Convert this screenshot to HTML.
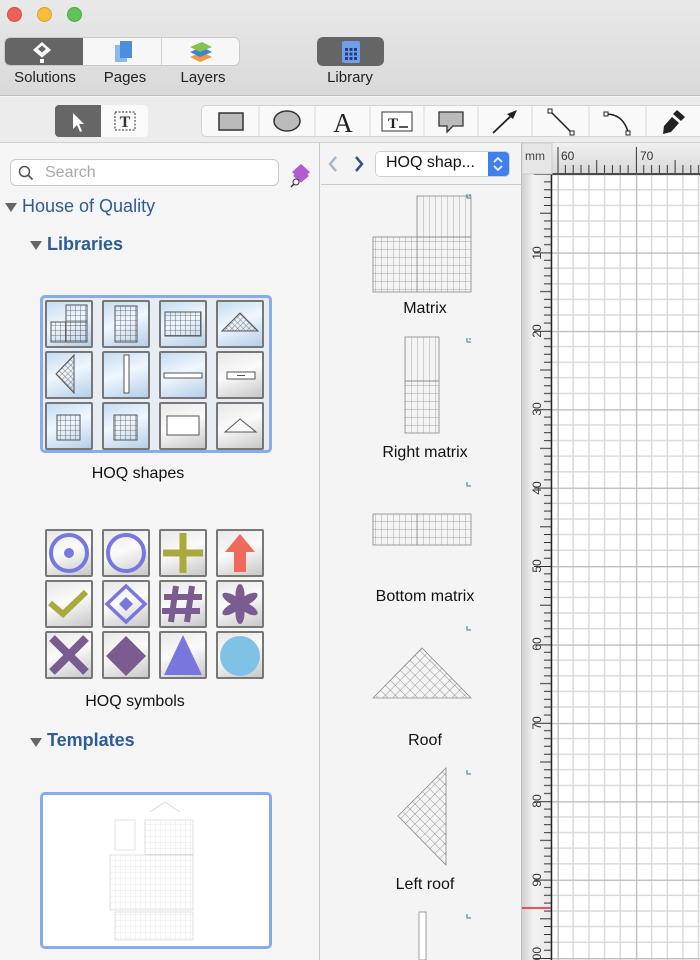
<!DOCTYPE html>
<html><head><meta charset="utf-8"><style>
*{margin:0;padding:0;box-sizing:border-box}
body{width:700px;height:960px;overflow:hidden;background:#f4f4f4;font-family:"Liberation Sans",sans-serif;position:relative}
.a{position:absolute}
.lbl{position:absolute;font-size:15px;color:#222;text-align:center}
.h{position:absolute;color:#2d5c97;font-size:18px}
.cell{position:absolute;width:48px;height:48px;border:2px solid #777;border-radius:2px;background:linear-gradient(160deg,#e8e8e8,#fafafa 45%,#c8c8c8)}
.cb{background:linear-gradient(160deg,#c4dcf2,#f0f7fd 45%,#b4cfea)}
.cap{position:absolute;font-size:16px;color:#111;text-align:center}
</style></head><body>
<div class="a" style="left:0;top:0;width:700px;height:96px;background:linear-gradient(#e9e9e9,#d9d9d9);border-bottom:1px solid #bdbdbd"></div>
<div class="a" style="left:7px;top:7px;width:15px;height:15px;border-radius:50%;background:#ee5f57;border:1px solid #d8493f"></div>
<div class="a" style="left:37px;top:7px;width:15px;height:15px;border-radius:50%;background:#f6bd3b;border:1px solid #dca12a"></div>
<div class="a" style="left:67px;top:7px;width:15px;height:15px;border-radius:50%;background:#5fc454;border:1px solid #49a83f"></div>
<div class="a" style="left:4px;top:37px;width:236px;height:29px;border-radius:6px;background:#f7f7f7;border:1px solid #c9c9c9;overflow:hidden">
 <div class="a" style="left:0;top:0;width:78px;height:29px;background:#656565"></div>
 <div class="a" style="left:156px;top:0;width:1px;height:29px;background:#d0d0d0"></div>
</div>
<svg class="a" style="left:30px;top:40px" width="24" height="24" viewBox="0 0 24 24"><path d="M12 2 L21 10 L12 18 L3 10Z" fill="#fff"/><path d="M5 13 L12 19 L19 13" stroke="#656565" stroke-width="2" fill="none"/><path d="M8 9 L12 5.5 L16 9 L12 12.5Z" fill="#656565"/><rect x="10" y="19" width="4" height="4" fill="#fff"/></svg>
<svg class="a" style="left:112px;top:40px" width="22" height="24"><rect x="3" y="5" width="12" height="17" fill="#8ab8ef"/><rect x="8" y="1" width="12" height="17" fill="#4a8ee0"/></svg>
<svg class="a" style="left:188px;top:40px" width="26" height="24"><path d="M2 17 L14 12 L24 17 L12 22Z" fill="#f09a3a"/><path d="M2 12 L14 7 L24 12 L12 17Z" fill="#3f83d8"/><path d="M2 7 L14 2 L24 7 L12 12Z" fill="#86c24a"/></svg>
<div class="lbl" style="left:4px;top:69px;width:82px">Solutions</div>
<div class="lbl" style="left:86px;top:69px;width:78px">Pages</div>
<div class="lbl" style="left:164px;top:69px;width:78px">Layers</div>
<div class="a" style="left:317px;top:37px;width:67px;height:29px;border-radius:6px;background:#656565"></div>
<svg class="a" style="left:340px;top:40px" width="22" height="24"><rect x="2" y="1" width="18" height="22" rx="2" fill="#6f9fe8"/><g fill="#1e3f80"><rect x="5" y="8" width="3" height="3"/><rect x="9.5" y="8" width="3" height="3"/><rect x="14" y="8" width="3" height="3"/><rect x="5" y="12.5" width="3" height="3"/><rect x="9.5" y="12.5" width="3" height="3"/><rect x="14" y="12.5" width="3" height="3"/><rect x="5" y="17" width="3" height="3"/><rect x="9.5" y="17" width="3" height="3"/><rect x="14" y="17" width="3" height="3"/></g></svg>
<div class="lbl" style="left:310px;top:69px;width:80px">Library</div>
<div class="a" style="left:0;top:97px;width:700px;height:46px;background:#ececec;border-bottom:1px solid #d0d0d0"></div>
<div class="a" style="left:55px;top:105px;width:93px;height:32px;border-radius:4px;background:#fafafa;overflow:hidden"><div class="a" style="left:0;top:0;width:46px;height:32px;background:#666"></div></div>
<svg class="a" style="left:55px;top:105px" width="93" height="32"><path d="M18 8 L18 24 L22 20 L25 27 L27 26 L24 19 L29 19Z" fill="#fff"/><rect x="60" y="7" width="20" height="18" fill="none" stroke="#333" stroke-dasharray="2 1.5"/><text x="70" y="22" text-anchor="middle" font-family="Liberation Serif" font-size="16" font-weight="bold" fill="#333">T</text></svg>
<div class="a" style="left:201px;top:105px;width:510px;height:32px;border-radius:5px;background:#f9f9f9;border:1px solid #d3d3d3"></div>
<svg class="a" style="left:201px;top:105px" width="499" height="32" font-family="Liberation Serif">
<g stroke="#d8d8d8"><line x1="58" y1="1" x2="58" y2="31"/><line x1="114" y1="1" x2="114" y2="31"/><line x1="169" y1="1" x2="169" y2="31"/><line x1="223" y1="1" x2="223" y2="31"/><line x1="277" y1="1" x2="277" y2="31"/><line x1="331" y1="1" x2="331" y2="31"/><line x1="388" y1="1" x2="388" y2="31"/><line x1="445" y1="1" x2="445" y2="31"/></g>
<rect x="18" y="8" width="24" height="17" fill="#bbb" stroke="#333" stroke-width="1.5"/>
<ellipse cx="86" cy="16" rx="13" ry="10" fill="#bbb" stroke="#333" stroke-width="1.5"/>
<text x="142" y="27" text-anchor="middle" font-size="27" fill="#222">A</text>
<rect x="181" y="7" width="30" height="19" fill="#fff" stroke="#333"/><text x="192" y="23" text-anchor="middle" font-size="15" font-weight="bold" fill="#222">T</text><line x1="198" y1="22" x2="207" y2="22" stroke="#222" stroke-width="1.5"/>
<path d="M238 7 H262 V21 H252 L246 27 L246 21 H238Z" fill="#bbb" stroke="#333" stroke-width="1.3"/>
<path d="M292 28 L313 8" stroke="#222" stroke-width="1.8"/><path d="M316 5 L306 9 L312 14Z" fill="#222"/>
<path d="M349 6 L371 28" stroke="#222" stroke-width="1.5"/><rect x="347" y="4" width="4" height="4" fill="#fff" stroke="#222"/><rect x="369" y="26" width="4" height="4" fill="#fff" stroke="#222"/>
<path d="M405 9 Q422 9 427 27" stroke="#222" stroke-width="1.5" fill="none"/><rect x="403" y="7" width="4" height="4" fill="#fff" stroke="#222"/><rect x="425" y="26" width="4" height="4" fill="#fff" stroke="#222"/>
<path d="M463 21 L471 12 L478 18 L470 27 L462 29Z" fill="#222"/><path d="M472 9 L476 5 L484 12 L480 16Z" fill="#222"/>
</svg>
<div class="a" style="left:0;top:143px;width:320px;height:817px;background:#f5f5f5;border-right:1px solid #c8c8c8"></div>
<div class="a" style="left:10px;top:159px;width:269px;height:27px;border:1px solid #c9c9c9;border-radius:6px;background:#fff"></div>
<svg class="a" style="left:18px;top:165px" width="16" height="16"><circle cx="6.5" cy="6.5" r="5" fill="none" stroke="#555" stroke-width="1.5"/><line x1="10" y1="10" x2="14.5" y2="14.5" stroke="#555" stroke-width="1.8"/></svg>
<div class="a" style="left:45px;top:164px;font-size:16px;color:#aaa">Search</div>
<svg class="a" style="left:289px;top:162px" width="24" height="26"><path d="M12 2 L21 10 L12 18 L3 10Z" fill="#b25ad0"/><path d="M5 13 L12 19 L19 13" stroke="#b25ad0" stroke-width="2.5" fill="none"/><circle cx="7" cy="20" r="3" fill="none" stroke="#333"/><line x1="5" y1="22" x2="2" y2="25" stroke="#333" stroke-width="1.5"/></svg>
<svg class="a" style="left:4px;top:200px" width="14" height="14"><path d="M1 3 H13 L7 12Z" fill="#666"/></svg>
<div class="h" style="left:22px;top:196px">House of Quality</div>
<svg class="a" style="left:29px;top:238px" width="14" height="14"><path d="M1 3 H13 L7 12Z" fill="#666"/></svg>
<div class="h" style="left:47px;top:234px;font-weight:bold">Libraries</div>
<div class="a" style="left:40px;top:295px;width:232px;height:158px;border:3px solid #86acf0;border-radius:5px;background:#e8edf4"></div>
<div class="cell cb" style="left:45px;top:300px"></div><div class="cell cb" style="left:102px;top:300px"></div><div class="cell cb" style="left:159px;top:300px"></div><div class="cell cb" style="left:216px;top:300px"></div>
<div class="cell cb" style="left:45px;top:351px"></div><div class="cell cb" style="left:102px;top:351px"></div><div class="cell cb" style="left:159px;top:351px"></div><div class="cell" style="left:216px;top:351px"></div>
<div class="cell cb" style="left:45px;top:402px"></div><div class="cell cb" style="left:102px;top:402px"></div><div class="cell" style="left:159px;top:402px"></div><div class="cell" style="left:216px;top:402px"></div>
<svg class="a" style="left:0;top:0" width="320" height="960" fill="none" stroke="#555">
<defs><pattern id="m" width="5" height="5" patternUnits="userSpaceOnUse"><path d="M0 0H5M0 0V5" stroke="#555" stroke-width="0.8"/></pattern><pattern id="dx" width="4" height="4" patternUnits="userSpaceOnUse" patternTransform="rotate(45)"><path d="M0 0H4M0 0V4" stroke="#555" stroke-width="0.7"/></pattern></defs>
<rect x="51" y="322" width="36" height="20" fill="url(#m)"/><rect x="66" y="305" width="21" height="37" fill="url(#m)"/>
<rect x="115" y="306" width="22" height="36" fill="url(#m)"/>
<rect x="165" y="312" width="36" height="24" fill="url(#m)"/>
<path d="M222 331 L240 313 L258 331Z" fill="url(#dx)"/>
<path d="M74 355 L74 393 L56 374Z" fill="url(#dx)"/>
<rect x="124" y="355" width="5" height="38" fill="#fff"/>
<rect x="164" y="373" width="38" height="5" fill="#fff"/>
<rect x="227" y="372" width="28" height="7" fill="#fff"/><line x1="237" y1="375.5" x2="245" y2="375.5"/>
<rect x="57" y="415" width="23" height="25" fill="url(#m)"/>
<rect x="114" y="415" width="23" height="25" fill="url(#m)"/>
<rect x="167" y="416" width="32" height="19" fill="#fff"/>
<path d="M225 432 L240 419 L256 432Z" fill="#fff"/>
</svg>
<div class="cap" style="left:40px;top:465px;width:196px">HOQ shapes</div>
<div class="cell" style="left:45px;top:529px"></div><div class="cell" style="left:102px;top:529px"></div><div class="cell" style="left:159px;top:529px"></div><div class="cell" style="left:216px;top:529px"></div>
<div class="cell" style="left:45px;top:580px"></div><div class="cell" style="left:102px;top:580px"></div><div class="cell" style="left:159px;top:580px"></div><div class="cell" style="left:216px;top:580px"></div>
<div class="cell" style="left:45px;top:631px"></div><div class="cell" style="left:102px;top:631px"></div><div class="cell" style="left:159px;top:631px"></div><div class="cell" style="left:216px;top:631px"></div>
<svg class="a" style="left:0;top:0" width="320" height="960">
<circle cx="69" cy="553" r="18" fill="none" stroke="#7777dd" stroke-width="4"/><circle cx="69" cy="553" r="5" fill="#7777dd"/>
<circle cx="126" cy="553" r="18" fill="none" stroke="#7777dd" stroke-width="4"/>
<path d="M183 533V573M163 553H203" stroke="#a8ab3c" stroke-width="7"/>
<path d="M240 534 L255 552 H246 V572 H234 V552 H225Z" fill="#ee6a5a"/>
<path d="M50 603 L63 614 L86 592" stroke="#a8ab3c" stroke-width="6" fill="none"/>
<path d="M126 586 L145 604 L126 622 L107 604Z" fill="none" stroke="#7777dd" stroke-width="3.5"/><path d="M126 597 L133 604 L126 611 L119 604Z" fill="#7777dd"/>
<path d="M176 586 L171 622 M192 586 L187 622 M164 597 H202 M162 611 H200" stroke="#7a5c90" stroke-width="6"/>
<g fill="#7a5c90" transform="translate(240 604)"><ellipse rx="4.5" ry="11" cy="-9"/><ellipse rx="4.5" ry="11" cy="-9" transform="rotate(60)"/><ellipse rx="4.5" ry="11" cy="-9" transform="rotate(120)"/><ellipse rx="4.5" ry="11" cy="-9" transform="rotate(180)"/><ellipse rx="4.5" ry="11" cy="-9" transform="rotate(240)"/><ellipse rx="4.5" ry="11" cy="-9" transform="rotate(300)"/></g>
<path d="M52 638 L86 672 M86 638 L52 672" stroke="#7a5c90" stroke-width="8"/>
<path d="M126 636 L146 656 L126 676 L106 656Z" fill="#7a5c90"/>
<path d="M183 635 L202 675 H164Z" fill="#7777dd"/>
<circle cx="240" cy="656" r="20" fill="#7ec2e6"/>
</svg>
<div class="cap" style="left:37px;top:693px;width:196px">HOQ symbols</div>
<svg class="a" style="left:29px;top:735px" width="14" height="14"><path d="M1 3 H13 L7 12Z" fill="#666"/></svg>
<div class="h" style="left:47px;top:730px;font-weight:bold">Templates</div>
<div class="a" style="left:40px;top:792px;width:232px;height:157px;border:3px solid #86acf0;border-radius:5px;background:#fff"></div>
<svg class="a" style="left:105px;top:800px" width="110" height="143" stroke="#ccc" stroke-width="0.6" fill="none">
<defs><pattern id="tm" width="5" height="6" patternUnits="userSpaceOnUse"><path d="M0 0H5M0 0V6" stroke="#d4d4d4" stroke-width="0.5"/></pattern></defs>
<path d="M45 12 L60 2 L75 12"/><rect x="10" y="20" width="20" height="30"/>
<rect x="40" y="20" width="48" height="35" fill="url(#tm)"/>
<rect x="5" y="55" width="83" height="55" fill="url(#tm)"/>
<rect x="10" y="112" width="78" height="28" fill="url(#tm)"/>
</svg>
<div class="a" style="left:321px;top:143px;width:201px;height:817px;background:#f4f4f4;border-right:1px solid #c0c0c0"></div>
<div class="a" style="left:321px;top:184px;width:201px;height:1px;background:#c8c8c8"></div>
<svg class="a" style="left:325px;top:153px" width="48" height="22"><path d="M11 4 L5 11 L11 18" stroke="#a7b8d4" stroke-width="2.5" fill="none"/><path d="M31 4 L37 11 L31 18" stroke="#2d5190" stroke-width="2.5" fill="none"/></svg>
<div class="a" style="left:375px;top:151px;width:135px;height:26px;border-radius:5px;background:#fff;border:1px solid #cfcfcf;overflow:hidden"><div class="a" style="left:112px;top:0;width:23px;height:26px;background:#3f80ee"></div></div>
<div class="a" style="left:386px;top:154px;font-size:16px;color:#111">HOQ shap...</div>
<svg class="a" style="left:490px;top:154px" width="16" height="20"><path d="M4 8 L8 4 L12 8 M4 12 L8 16 L12 12" stroke="#fff" stroke-width="1.6" fill="none"/></svg>
<svg class="a" style="left:321px;top:185px" width="201" height="775" stroke="#888" stroke-width="0.8" fill="none">
<defs><pattern id="g5" x="0" y="0" width="6" height="8" patternUnits="userSpaceOnUse"><path d="M0 0H6M0 0V8" stroke="#888" stroke-width="0.7"/></pattern><pattern id="gv" width="6" height="60" patternUnits="userSpaceOnUse"><path d="M0 0V60" stroke="#888" stroke-width="0.7"/></pattern><pattern id="rd" width="7" height="7" patternUnits="userSpaceOnUse" patternTransform="rotate(45)"><path d="M0 0H7M0 0V7" stroke="#777" stroke-width="0.7"/></pattern></defs>
<rect x="96" y="11" width="54" height="41" fill="url(#gv)"/>
<rect x="52" y="52" width="98" height="55" fill="url(#g5)"/><line x1="96" y1="52" x2="96" y2="107"/>
<rect x="84" y="152" width="34" height="44" fill="url(#gv)"/><rect x="84" y="196" width="34" height="52" fill="url(#g5)"/>
<rect x="52" y="329" width="98" height="31" fill="url(#g5)"/><line x1="96" y1="329" x2="96" y2="360"/>
<path d="M52 513 L101 463 L150 513Z" fill="url(#rd)"/>
<path d="M125 583 L125 680 L77 631Z" fill="url(#rd)"/>
<rect x="98" y="727" width="7" height="48" fill="#fff"/>
<g stroke="#3a6fb0" stroke-width="1"><path d="M146 9 V13 H150 M148 10 L150 10"/><path d="M146 153 V157 H150 M148 154 L150 154"/><path d="M146 297 V301 H150"/><path d="M146 441 V445 H150"/><path d="M146 585 V589 H150"/><path d="M146 729 V733 H150"/></g>
</svg>
<div class="cap" style="left:321px;top:300px;width:208px">Matrix</div>
<div class="cap" style="left:321px;top:444px;width:208px">Right matrix</div>
<div class="cap" style="left:321px;top:588px;width:208px">Bottom matrix</div>
<div class="cap" style="left:321px;top:732px;width:208px">Roof</div>
<div class="cap" style="left:321px;top:876px;width:208px">Left roof</div>
<svg class="a" style="left:522px;top:143px" width="178" height="817" font-family="Liberation Sans" font-size="12">
<defs>
<linearGradient id="rv" x1="0" x2="1"><stop offset="0" stop-color="#d0d0d0"/><stop offset="0.4" stop-color="#f3f3f3"/><stop offset="1" stop-color="#e6e6e6"/></linearGradient>
<linearGradient id="rh" x1="0" y1="0" x2="0" y2="1"><stop offset="0" stop-color="#f0f0f0"/><stop offset="1" stop-color="#d8d8d8"/></linearGradient>
<pattern id="grid" x="35.5" y="31" width="78.4" height="78.4" patternUnits="userSpaceOnUse"><path d="M0 15.7H78.4M0 31.4H78.4M0 47H78.4M0 62.7H78.4M15.7 0V78.4M31.4 0V78.4M47 0V78.4M62.7 0V78.4" stroke="#d9d9d9" stroke-width="1.5"/><path d="M0 0.5H78.4M0.5 0V78.4" stroke="#bdbdbd" stroke-width="1.8"/></pattern>
<pattern id="tv" x="0" y="31" width="30" height="78.4" patternUnits="userSpaceOnUse"><g stroke="#333" stroke-width="1"><path d="M12 0.5H30M22 7.84H30M22 15.7H30M22 23.5H30M22 31.4H30M18 39.2H30M22 47H30M22 54.9H30M22 62.7H30M22 70.6H30"/></g></pattern>
<pattern id="th" x="35.5" y="0" width="78.4" height="32" patternUnits="userSpaceOnUse"><g stroke="#333" stroke-width="1"><path d="M0.5 4V30M7.84 22V30M15.7 22V30M23.5 22V30M31.4 22V30M39.2 17V30M47 22V30M54.9 22V30M62.7 22V30M70.6 22V30"/></g></pattern>
</defs>
<rect x="30" y="31" width="148" height="786" fill="#fff"/>
<rect x="30" y="31" width="148" height="786" fill="url(#grid)"/>
<rect x="0" y="0" width="30" height="817" fill="url(#rv)"/>
<rect x="0" y="31" width="30" height="786" fill="url(#tv)"/>
<line x1="29.5" y1="31" x2="29.5" y2="817" stroke="#222" stroke-width="1.5"/>
<rect x="30" y="0" width="148" height="31" fill="url(#rh)"/>
<rect x="30" y="0" width="148" height="31" fill="url(#th)"/>
<line x1="30" y1="31" x2="178" y2="31" stroke="#222" stroke-width="1.5"/>
<rect x="0" y="0" width="30" height="31" fill="#e6e6e6" stroke="#ccc"/>
<text x="3" y="17" font-size="12" fill="#444">mm</text>
<text x="39" y="17" fill="#333">60</text><text x="118" y="17" fill="#333">70</text>
<line x1="0" y1="765" x2="29" y2="765" stroke="#e22" stroke-width="1.5"/>
<g fill="#333" font-size="12">
<text transform="translate(19 110) rotate(-90)" text-anchor="middle">10</text>
<text transform="translate(19 188) rotate(-90)" text-anchor="middle">20</text>
<text transform="translate(19 266) rotate(-90)" text-anchor="middle">30</text>
<text transform="translate(19 345) rotate(-90)" text-anchor="middle">40</text>
<text transform="translate(19 423) rotate(-90)" text-anchor="middle">50</text>
<text transform="translate(19 501) rotate(-90)" text-anchor="middle">60</text>
<text transform="translate(19 580) rotate(-90)" text-anchor="middle">70</text>
<text transform="translate(19 658) rotate(-90)" text-anchor="middle">80</text>
<text transform="translate(19 737) rotate(-90)" text-anchor="middle">90</text>
<text transform="translate(19 814) rotate(-90)" text-anchor="middle">100</text>
</g>
</svg>
</body></html>
